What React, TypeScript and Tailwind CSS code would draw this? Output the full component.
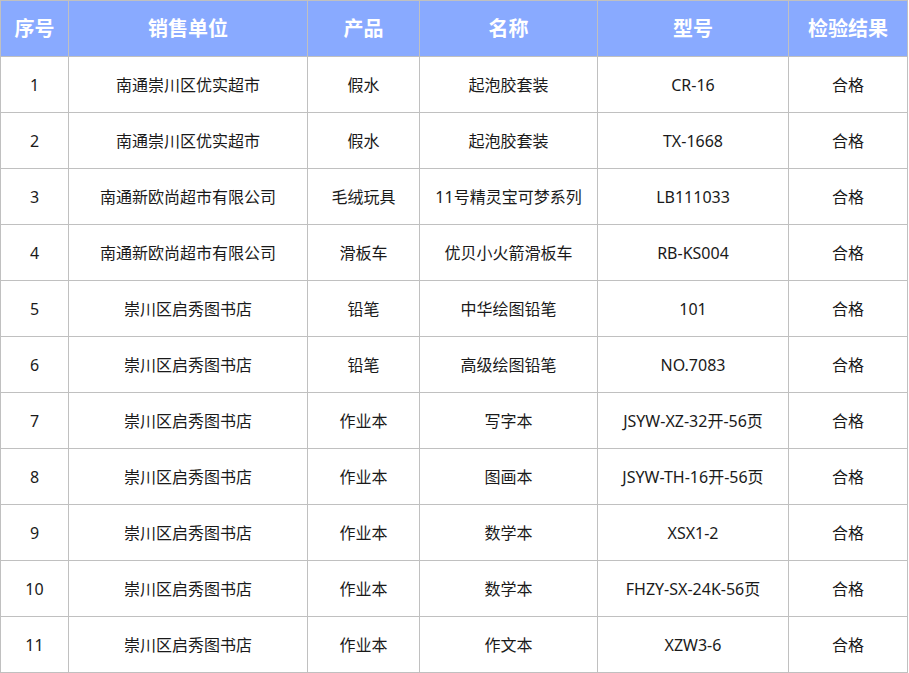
const rows = [
  ["1", "南通崇川区优实超市", "假水", "起泡胶套装", "CR-16", "合格"],
  ["2", "南通崇川区优实超市", "假水", "起泡胶套装", "TX-1668", "合格"],
  ["3", "南通新欧尚超市有限公司", "毛绒玩具", "11号精灵宝可梦系列", "LB111033", "合格"],
  ["4", "南通新欧尚超市有限公司", "滑板车", "优贝小火箭滑板车", "RB-KS004", "合格"],
  ["5", "崇川区启秀图书店", "铅笔", "中华绘图铅笔", "101", "合格"],
  ["6", "崇川区启秀图书店", "铅笔", "高级绘图铅笔", "NO.7083", "合格"],
  ["7", "崇川区启秀图书店", "作业本", "写字本", "JSYW-XZ-32开-56页", "合格"],
  ["8", "崇川区启秀图书店", "作业本", "图画本", "JSYW-TH-16开-56页", "合格"],
  ["9", "崇川区启秀图书店", "作业本", "数学本", "XSX1-2", "合格"],
  ["10", "崇川区启秀图书店", "作业本", "数学本", "FHZY-SX-24K-56页", "合格"],
  ["11", "崇川区启秀图书店", "作业本", "作文本", "XZW3-6", "合格"],
];

const headers = ["序号", "销售单位", "产品", "名称", "型号", "检验结果"];

export default function App() {
  return (
    <div className="w-[909px] h-[673px] bg-white font-['Noto_Sans','Noto_Sans_CJK_SC',sans-serif]">
      <div className="grid grid-cols-[68px_239px_112px_178px_191px_119px] w-[908px] border-l border-t border-[#c0c0c0]">
        {headers.map((h) => (
          <div
            key={h}
            className="h-[56px] flex items-center justify-center bg-[#89aaff] text-white font-bold text-[20px] border-r border-b border-[#c0c0c0]"
          >
            {h}
          </div>
        ))}
        {rows.map((r) =>
          r.map((c, i) => (
            <div
              key={r[0] + "-" + i}
              className="h-[56px] flex items-center justify-center text-[#1a1a1a] text-[16px] border-r border-b border-[#c0c0c0] whitespace-nowrap"
            >
              {c}
            </div>
          ))
        )}
      </div>
    </div>
  );
}
